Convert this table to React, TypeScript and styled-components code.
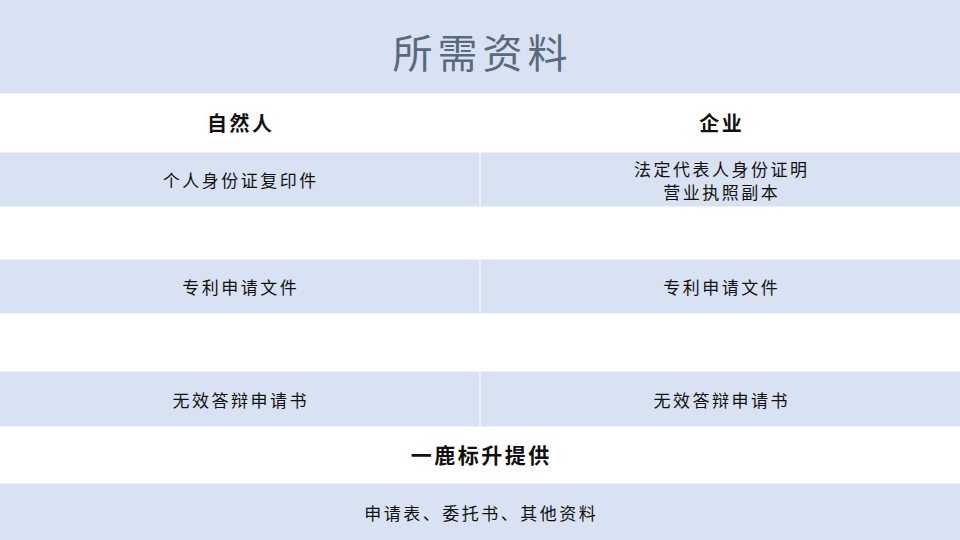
import styled, { createGlobalStyle } from 'styled-components';

const GlobalStyle = createGlobalStyle`
  html, body {
    margin: 0;
    padding: 0;
    background: #ffffff;
  }
  body {
    font-family: "Noto Sans CJK SC", "Noto Sans", sans-serif;
    color: #111111;
  }
`;

const BLUE = '#d9e2f3';
const LINE = '#edf1f9';

const Page = styled.div`
  width: 960px;
  height: 540px;
  display: flex;
  flex-direction: column;
  overflow: hidden;
`;

const Header = styled.div`
  height: 94px;
  background: ${BLUE};
  display: flex;
  align-items: center;
  justify-content: center;
  padding-top: 8px;
  border-bottom: 1px solid ${LINE};
  box-sizing: border-box;
`;

const Title = styled.h1`
  margin: 0;
  font-size: 40px;
  font-weight: 400;
  letter-spacing: 5px;
  padding-left: 5px;
  color: #5a6a7e;
  line-height: 1;
`;

const Row = styled.div<{ $h: number; $blue?: boolean }>`
  height: ${p => p.$h}px;
  box-sizing: border-box;
  display: grid;
  grid-template-columns: 1fr 1fr;
  column-gap: 2px;
  background: ${p => (p.$blue ? LINE : '#ffffff')};
  ${p => (p.$blue ? `border-top: 1px solid ${LINE}; border-bottom: 1px solid ${LINE};` : '')}
`;

const FullRow = styled.div<{ $h: number; $blue?: boolean }>`
  height: ${p => p.$h}px;
  box-sizing: border-box;
  display: flex;
  align-items: center;
  justify-content: center;
  background: ${p => (p.$blue ? BLUE : '#ffffff')};
  ${p => (p.$blue ? `border-top: 1px solid ${LINE};` : '')}
`;

const Cell = styled.div<{ $blue?: boolean }>`
  display: flex;
  flex-direction: column;
  align-items: center;
  justify-content: center;
  background: ${p => (p.$blue ? BLUE : '#ffffff')};
  text-align: center;
`;

const HeadText = styled.span<{ $size?: number }>`
  font-size: ${p => p.$size ?? 20}px;
  font-weight: 700;
  letter-spacing: 2.5px;
  padding-left: 2.5px;
  line-height: 1.2;
`;

const ItemText = styled.span`
  font-size: 17px;
  font-weight: 400;
  letter-spacing: 2.5px;
  padding-left: 2.5px;
  line-height: 23px;
`;

const individual = ['个人身份证复印件', '', '专利申请文件', '', '无效答辩申请书'];
const company = [['法定代表人身份证明', '营业执照副本'], [], ['专利申请文件'], [], ['无效答辩申请书']];
const heights = [55, 52, 55, 57, 56];

export default function App() {
  return (
    <>
      <GlobalStyle />
      <Page>
        <Header>
          <Title>所需资料</Title>
        </Header>
        <Row $h={58}>
          <Cell>
            <HeadText>自然人</HeadText>
          </Cell>
          <Cell>
            <HeadText>企业</HeadText>
          </Cell>
        </Row>
        {individual.map((text, i) => {
          const blue = i % 2 === 0;
          return (
            <Row key={i} $h={heights[i]} $blue={blue}>
              <Cell $blue={blue}>{text && <ItemText>{text}</ItemText>}</Cell>
              <Cell $blue={blue}>
                {company[i].map(line => (
                  <ItemText key={line}>{line}</ItemText>
                ))}
              </Cell>
            </Row>
          );
        })}
        <FullRow $h={56}>
          <HeadText $size={21}>一鹿标升提供</HeadText>
        </FullRow>
        <FullRow $h={57} $blue>
          <ItemText>申请表、委托书、其他资料</ItemText>
        </FullRow>
      </Page>
    </>
  );
}
